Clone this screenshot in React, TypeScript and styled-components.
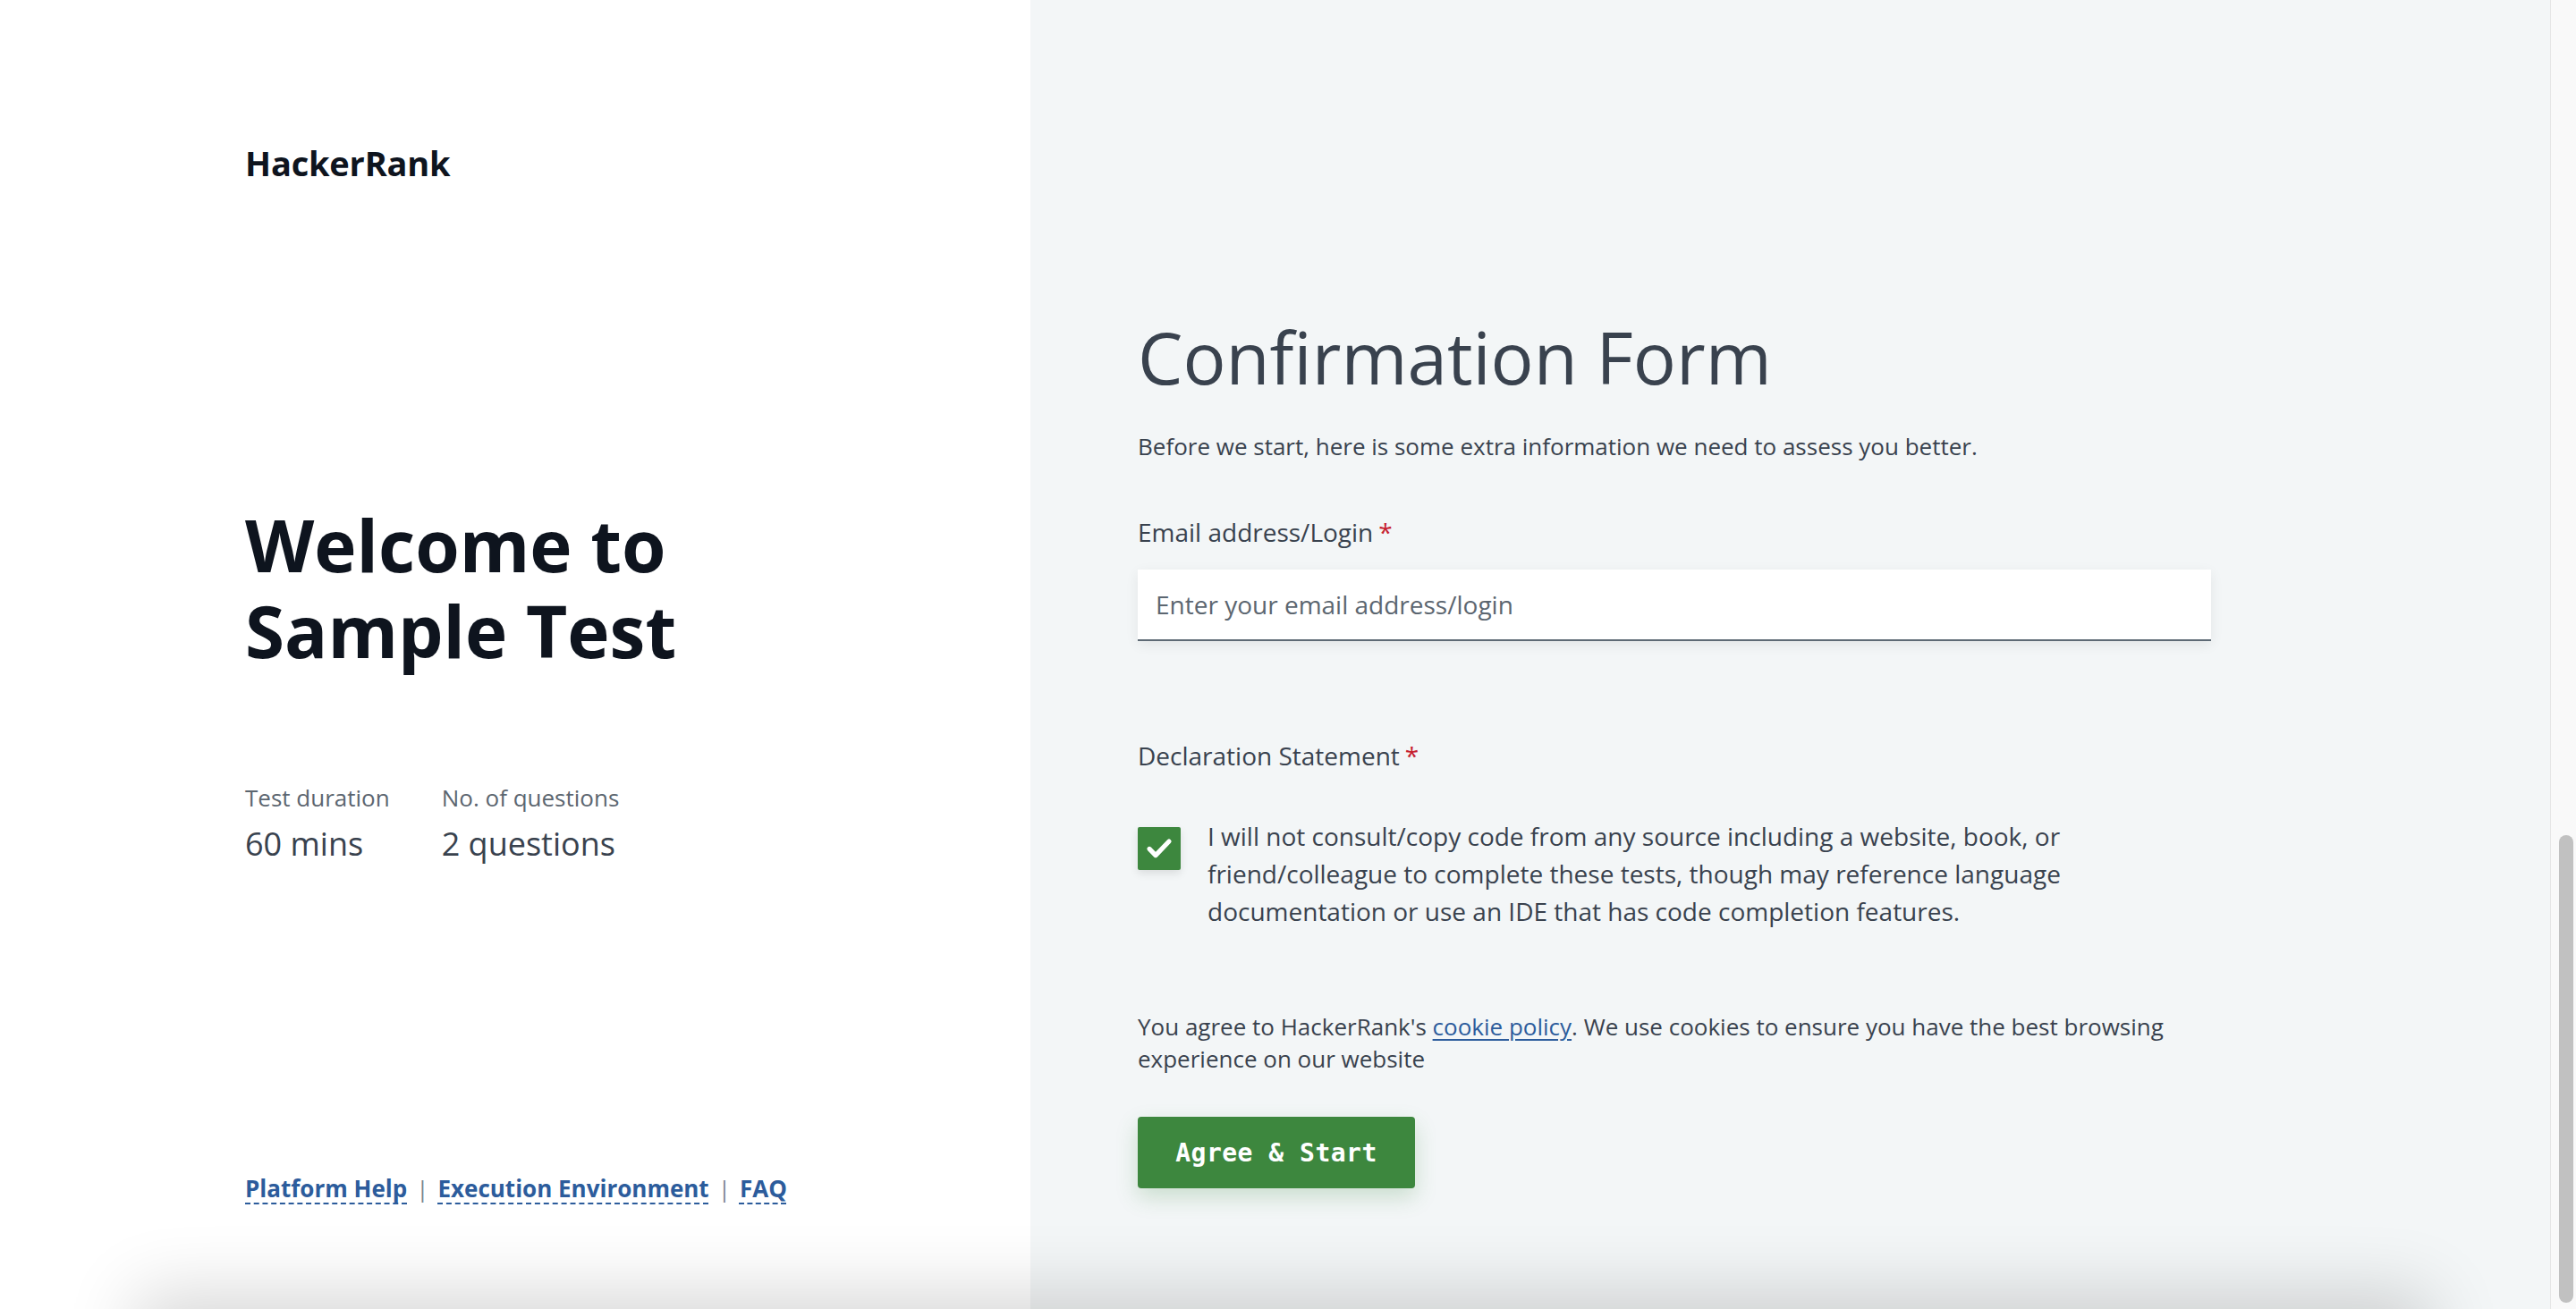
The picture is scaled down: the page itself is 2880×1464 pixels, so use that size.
import React from "react";
import styled, { createGlobalStyle } from "styled-components";

const GlobalStyle = createGlobalStyle`
  html, body {
    margin: 0;
    padding: 0;
    height: 100%;
    overflow: hidden;
  }
  body {
    font-family: "Open Sans", "Noto Sans", Arial, sans-serif;
    color: #39424e;
    -webkit-font-smoothing: antialiased;
  }
  * { box-sizing: border-box; }
`;

const Page = styled.div`
  display: flex;
  width: 100vw;
  height: 100vh;
`;

const LeftPanel = styled.aside`
  width: 1152px;
  flex-shrink: 0;
  background: #ffffff;
  display: flex;
  flex-direction: column;
  padding: 156px 0 0 274px;
`;

const Logo = styled.div`
  font-size: 38px;
  font-weight: 700;
  color: #0e141e;
  letter-spacing: -0.2px;
`;

const Welcome = styled.h1`
  margin: 353px 0 0;
  font-size: 80px;
  line-height: 96px;
  font-weight: 700;
  color: #0e141e;
`;

const Stats = styled.div`
  display: flex;
  gap: 58px;
  margin-top: 121px;
`;

const Stat = styled.div`
  display: flex;
  flex-direction: column;
  gap: 10px;
`;

const StatLabel = styled.span`
  font-size: 26px;
  line-height: 36px;
  color: #5c6670;
`;

const StatValue = styled.span`
  font-size: 36px;
  line-height: 48px;
  color: #39424e;
`;

const FooterLinks = styled.nav`
  display: flex;
  align-items: center;
  margin-top: 343px;
  font-size: 26px;
  line-height: 36px;
  font-weight: 700;
`;

const FooterLink = styled.a`
  color: #2c5c9c;
  text-decoration: underline dashed 2px;
  text-underline-offset: 6px;
  cursor: pointer;
`;

const Separator = styled.span`
  color: #7b8590;
  font-weight: 400;
  margin: 0 10px;
`;

const RightPanel = styled.main`
  flex: 1;
  background: #f3f6f7;
  padding: 351px 0 0 120px;
  display: flex;
  flex-direction: column;
`;

const FormTitle = styled.h2`
  margin: 0;
  font-size: 80px;
  line-height: 96px;
  font-weight: 400;
  color: #39424e;
`;

const Intro = styled.p`
  margin: 34px 0 0;
  font-size: 26px;
  line-height: 36px;
  color: #39424e;
`;

const FieldLabel = styled.label<{ $top: number }>`
  display: block;
  margin-top: ${(p) => p.$top}px;
  font-size: 28px;
  line-height: 40px;
  color: #39424e;
`;

const Required = styled.span`
  color: #c6202f;
  margin-left: 6px;
`;

const EmailInput = styled.input`
  display: block;
  width: 1200px;
  height: 80px;
  margin-top: 22px;
  padding: 0 20px;
  border: none;
  border-bottom: 2px solid #5e6a75;
  background: #ffffff;
  box-shadow: 0 4px 14px rgba(0, 0, 0, 0.07);
  font-family: inherit;
  font-size: 28px;
  color: #39424e;
  outline: none;
  &::placeholder {
    color: #5c6670;
  }
`;

const CheckRow = styled.div`
  display: flex;
  align-items: flex-start;
  gap: 30px;
  margin-top: 49px;
`;

const CheckBox = styled.span`
  width: 48px;
  height: 48px;
  flex-shrink: 0;
  margin-top: 11px;
  background: #3d873e;
  border-radius: 2px;
  box-shadow: 0 4px 10px rgba(0, 0, 0, 0.1);
  display: flex;
  align-items: center;
  justify-content: center;
`;

const CheckText = styled.p`
  margin: 0;
  max-width: 990px;
  font-size: 28px;
  line-height: 42px;
  color: #39424e;
`;

const Cookie = styled.p`
  margin: 90px 0 0;
  width: 1200px;
  font-size: 26px;
  line-height: 36px;
  color: #39424e;
`;

const CookieLink = styled.a`
  color: #2c5c9c;
  text-decoration: underline;
  text-underline-offset: 4px;
  cursor: pointer;
`;

const StartButton = styled.button`
  align-self: flex-start;
  margin-top: 47px;
  height: 80px;
  width: 310px;
  border: none;
  border-radius: 4px;
  background: #3d873e;
  color: #ffffff;
  font-family: "DejaVu Sans Mono", "Liberation Mono", monospace;
  font-weight: 700;
  font-size: 28px;
  letter-spacing: 0.5px;
  box-shadow: 0 10px 24px rgba(61, 135, 62, 0.22);
  cursor: pointer;
`;

const ScrollTrack = styled.div`
  width: 29px;
  flex-shrink: 0;
  background: #f9f9f9;
  border-left: 1px solid #e6e6e6;
  display: flex;
  flex-direction: column;
  justify-content: flex-end;
  align-items: center;
  padding: 0 0 7px 6px;
`;

const ScrollThumb = styled.div`
  width: 16px;
  height: 523px;
  border-radius: 8px;
  background: #c1c1c1;
`;

const BottomSheetShadow = styled.div`
  position: fixed;
  left: 170px;
  right: 180px;
  top: 100vh;
  height: 120px;
  box-shadow: 0 0 80px 18px rgba(0, 0, 0, 0.16);
  pointer-events: none;
`;

const Check = () => (
  <svg width="48" height="48" viewBox="0 0 24 24" fill="none">
    <polyline
      points="6.5,12.2 10,15.8 17.5,8"
      stroke="#ffffff"
      strokeWidth="2.6"
      strokeLinecap="round"
      strokeLinejoin="round"
    />
  </svg>
);

export default function App() {
  return (
    <>
      <GlobalStyle />
      <Page>
        <LeftPanel>
          <Logo>HackerRank</Logo>
          <Welcome>
            Welcome to
            <br />
            Sample Test
          </Welcome>
          <Stats>
            <Stat>
              <StatLabel>Test duration</StatLabel>
              <StatValue>60 mins</StatValue>
            </Stat>
            <Stat>
              <StatLabel>No. of questions</StatLabel>
              <StatValue>2 questions</StatValue>
            </Stat>
          </Stats>
          <FooterLinks>
            <FooterLink>Platform Help</FooterLink>
            <Separator>|</Separator>
            <FooterLink>Execution Environment</FooterLink>
            <Separator>|</Separator>
            <FooterLink>FAQ</FooterLink>
          </FooterLinks>
        </LeftPanel>
        <RightPanel>
          <FormTitle>Confirmation Form</FormTitle>
          <Intro>
            Before we start, here is some extra information we need to assess you better.
          </Intro>
          <FieldLabel $top={58}>
            Email address/Login<Required>*</Required>
          </FieldLabel>
          <EmailInput placeholder="Enter your email address/login" />
          <FieldLabel $top={108}>
            Declaration Statement<Required>*</Required>
          </FieldLabel>
          <CheckRow>
            <CheckBox>
              <Check />
            </CheckBox>
            <CheckText>
              I will not consult/copy code from any source including a website, book, or
              friend/colleague to complete these tests, though may reference language
              documentation or use an IDE that has code completion features.
            </CheckText>
          </CheckRow>
          <Cookie>
            You agree to HackerRank's <CookieLink>cookie policy</CookieLink>. We use cookies to
            ensure you have the best browsing experience on our website
          </Cookie>
          <StartButton>Agree &amp; Start</StartButton>
        </RightPanel>
        <ScrollTrack>
          <ScrollThumb />
        </ScrollTrack>
      </Page>
      <BottomSheetShadow />
    </>
  );
}
